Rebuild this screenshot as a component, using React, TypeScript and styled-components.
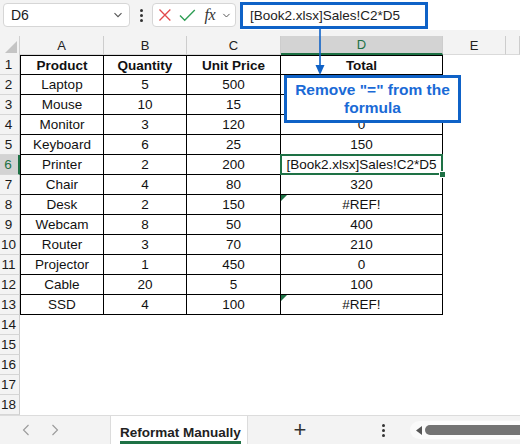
import React from "react";
import styled, { createGlobalStyle, css } from "styled-components";

const GlobalStyle = createGlobalStyle`
    html, body {
        margin: 0;
        padding: 0;
        background: #ffffff;
    }
    body {
        font-family: "Liberation Sans", Arial, sans-serif;
        color: #1a1a1a;
    }
`;

const GREEN = "#1e7145";
const BLUE = "#0f62c7";

const Page = styled.div`
    position: relative;
    width: 520px;
    height: 444px;
    overflow: hidden;
    background: #ffffff;
    display: flex;
    flex-direction: column;
`;

const TopBar = styled.div`
    height: 36px;
    background: #f3f3f3;
    display: flex;
    align-items: flex-start;
    padding: 3px 0 0 3px;
    box-sizing: border-box;
`;

const NameBox = styled.div`
    width: 127px;
    height: 24px;
    box-sizing: border-box;
    background: #ffffff;
    border: 1px solid #d6d6d6;
    border-radius: 4px;
    display: flex;
    align-items: center;
    justify-content: space-between;
    padding: 0 6px 0 7px;
    font-size: 14px;
    color: #1a1a1a;
`;

const Dots = styled.div`
    width: 22px;
    height: 24px;
    display: flex;
    flex-direction: column;
    align-items: center;
    justify-content: center;
    gap: 2px;
    span {
        width: 3px;
        height: 3px;
        border-radius: 50%;
        background: #333;
    }
`;

const FxBox = styled.div`
    width: 84px;
    height: 24px;
    box-sizing: border-box;
    background: #ffffff;
    border: 1px solid #d6d6d6;
    border-radius: 4px;
    display: flex;
    align-items: center;
    padding: 0 4px 0 5px;
    gap: 7px;
`;

const FxText = styled.span`
    font-family: "Liberation Serif", "Times New Roman", serif;
    font-style: italic;
    font-size: 16px;
    color: #333;
    margin-left: 2px;
    letter-spacing: -0.5px;
`;

const FormulaField = styled.div`
    flex: 1;
    height: 30px;
    margin-top: -3px;
    margin-left: 4px;
    background: #ffffff;
    display: flex;
    align-items: center;
`;

const Highlight = styled.div`
    width: 188px;
    height: 27px;
    box-sizing: border-box;
    border: 3px solid ${BLUE};
    display: flex;
    align-items: center;
    padding-left: 7px;
    font-size: 13.5px;
    color: #222;
    margin-top: 1px;
`;

const Sheet = styled.div`
    display: grid;
    grid-template-columns: 20px 84px 83px 94px 162px 63px 1fr;
    grid-template-rows: 19px repeat(18, 20px);
    font-size: 13.5px;
`;

const Corner = styled.div`
    background: #f3f3f3;
    border-right: 1px solid #d0d0d0;
    position: relative;
    &::after {
        content: "";
        position: absolute;
        right: 2px;
        bottom: 2px;
        border-style: solid;
        border-width: 0 0 12px 12px;
        border-color: transparent transparent #c4c4c4 transparent;
    }
`;

const ColHead = styled.div<{ $active?: boolean }>`
    background: ${(p) => (p.$active ? "#d3d3d3" : "#f3f3f3")};
    border-right: 1px solid #cdcdcd;
    border-bottom: ${(p) => (p.$active ? `2px solid ${GREEN}` : "1px solid #dadada")};
    box-sizing: border-box;
    display: flex;
    align-items: center;
    justify-content: center;
    font-size: 13px;
    color: ${(p) => (p.$active ? GREEN : "#222")};
`;

const RowHead = styled.div<{ $active?: boolean }>`
    background: ${(p) => (p.$active ? "#d3d3d3" : "#f3f3f3")};
    border-right: ${(p) => (p.$active ? `2px solid ${GREEN}` : "1px solid #cdcdcd")};
    border-bottom: 1px solid #d6d6d6;
    box-sizing: border-box;
    display: flex;
    align-items: center;
    justify-content: center;
    padding-right: 2px;
    font-size: 13.5px;
    color: ${(p) => (p.$active ? GREEN : "#1a1a1a")};
`;

const Cell = styled.div<{
    $table?: boolean;
    $bold?: boolean;
    $firstCol?: boolean;
    $firstRow?: boolean;
    $selected?: boolean;
    $flag?: boolean;
}>`
    position: relative;
    box-sizing: border-box;
    display: flex;
    align-items: center;
    justify-content: center;
    white-space: nowrap;
    color: #111;
    font-weight: ${(p) => (p.$bold ? 700 : 400)};
    ${(p) =>
        p.$table &&
        css`
            border-right: 1px solid #000;
            border-bottom: 1px solid #000;
        `}
    ${(p) =>
        p.$table &&
        p.$firstCol &&
        css`
            border-left: 1px solid #000;
        `}
    ${(p) =>
        p.$table &&
        p.$firstRow &&
        css`
            border-top: 1px solid #000;
        `}
    ${(p) =>
        p.$flag &&
        css`
            &::before {
                content: "";
                position: absolute;
                left: 0;
                top: 0;
                border-style: solid;
                border-width: 6px 6px 0 0;
                border-color: ${GREEN} transparent transparent transparent;
            }
        `}
    ${(p) =>
        p.$selected &&
        css`
            &::after {
                content: "";
                position: absolute;
                left: -1px;
                top: -1px;
                right: -1px;
                bottom: -1px;
                border: 2px solid ${GREEN};
                pointer-events: none;
            }
            &::before {
                content: "";
                position: absolute;
                right: -4px;
                bottom: -4px;
                width: 5px;
                height: 5px;
                background: ${GREEN};
                border: 1px solid #fff;
                z-index: 2;
            }
        `}
`;

const TabBar = styled.div`
    flex: 1;
    background: #f3f3f3;
    border-top: 1px solid #dcdcdc;
    display: flex;
    align-items: stretch;
`;

const NavArrows = styled.div`
    width: 110px;
    display: flex;
    align-items: center;
    padding-left: 22px;
    gap: 21px;
    box-sizing: border-box;
`;

const Tab = styled.div`
    width: 138px;
    background: #ffffff;
    border-left: 1px solid #dcdcdc;
    border-right: 1px solid #dcdcdc;
    display: flex;
    align-items: center;
    padding-left: 9px;
    box-sizing: border-box;
`;

const TabLabel = styled.span`
    font-size: 13.5px;
    font-weight: 600;
    color: #222;
    border-bottom: 3px solid ${GREEN};
    padding: 4px 0 1px;
    margin-top: 4px;
`;

const AddTab = styled.div`
    width: 104px;
    display: flex;
    align-items: center;
    justify-content: center;
    font-size: 22px;
    font-weight: 300;
    color: #333;
`;

const Spacer = styled.div`
    flex: 1;
    display: flex;
    align-items: center;
    justify-content: flex-end;
    padding-right: 16px;
`;

const Scroll = styled.div`
    width: 104px;
    margin: 5px 0;
    background: #fafafa;
    border-radius: 10px 0 0 10px;
    display: flex;
    align-items: center;
    padding-left: 6px;
    gap: 3px;
`;

const Thumb = styled.div`
    flex: 1;
    height: 10px;
    border-radius: 5px 0 0 5px;
    background: #717171;
`;

const Arrow = styled.svg`
    position: absolute;
    left: 314px;
    top: 29px;
`;

const Callout = styled.div`
    position: absolute;
    left: 284px;
    top: 75px;
    width: 177px;
    height: 48px;
    box-sizing: border-box;
    background: #ffffff;
    border: 3px solid ${BLUE};
    display: flex;
    align-items: center;
    justify-content: center;
    text-align: center;
    font-size: 15.5px;
    line-height: 18px;
    font-weight: 700;
    color: #1a6ad6;
    padding: 0 4px;
`;

const Chevron = ({ size = 10 }: { size?: number }) => (
    <svg width={size} height={size} viewBox="0 0 10 10">
        <path d="M1.5 3.2 L5 6.7 L8.5 3.2" fill="none" stroke="#555" strokeWidth="1.1" />
    </svg>
);

const columns = ["A", "B", "C", "D", "E", ""];

const rows: string[][] = [
    ["Product", "Quantity", "Unit Price", "Total"],
    ["Laptop", "5", "500", ""],
    ["Mouse", "10", "15", ""],
    ["Monitor", "3", "120", "0"],
    ["Keyboard", "6", "25", "150"],
    ["Printer", "2", "200", "[Book2.xlsx]Sales!C2*D5"],
    ["Chair", "4", "80", "320"],
    ["Desk", "2", "150", "#REF!"],
    ["Webcam", "8", "50", "400"],
    ["Router", "3", "70", "210"],
    ["Projector", "1", "450", "0"],
    ["Cable", "20", "5", "100"],
    ["SSD", "4", "100", "#REF!"],
];

const TOTAL_ROWS = 18;

export default function App() {
    const renderRow = (r: number) => {
        const data = rows[r];
        const rowNo = r + 1;
        const cells = [];
        for (let c = 0; c < 6; c++) {
            const inTable = !!data && c < 4;
            cells.push(
                <Cell
                    key={c}
                    $table={inTable}
                    $firstCol={c === 0}
                    $firstRow={r === 0}
                    $bold={r === 0}
                    $selected={rowNo === 6 && c === 3}
                    $flag={c === 3 && data?.[3] === "#REF!"}
                >
                    {inTable ? data[c] : ""}
                </Cell>
            );
        }
        return (
            <React.Fragment key={r}>
                <RowHead $active={rowNo === 6}>{rowNo}</RowHead>
                {cells}
            </React.Fragment>
        );
    };

    return (
        <>
            <GlobalStyle />
            <Page>
                <TopBar>
                    <NameBox>
                        D6
                        <Chevron />
                    </NameBox>
                    <Dots>
                        <span />
                        <span />
                        <span />
                    </Dots>
                    <FxBox>
                        <svg width="14" height="14" viewBox="0 0 14 14">
                            <path d="M1.5 1.5 L12.5 12.5 M12.5 1.5 L1.5 12.5" stroke="#e2494b" strokeWidth="1.3" />
                        </svg>
                        <svg width="17" height="14" viewBox="0 0 17 14">
                            <path d="M1 7.5 L5.8 12.3 L16 2" fill="none" stroke="#2f9e55" strokeWidth="1.4" />
                        </svg>
                        <FxText>fx</FxText>
                        <Chevron size={9} />
                    </FxBox>
                    <FormulaField>
                        <Highlight>[Book2.xlsx]Sales!C2*D5</Highlight>
                    </FormulaField>
                </TopBar>
                <Sheet>
                    <Corner />
                    {columns.map((col) => (
                        <ColHead key={col || "next"} $active={col === "D"}>
                            {col}
                        </ColHead>
                    ))}
                    {Array.from({ length: TOTAL_ROWS }, (_, r) => renderRow(r))}
                </Sheet>
                <TabBar>
                    <NavArrows>
                        <svg width="8" height="12" viewBox="0 0 8 12">
                            <path d="M6.5 1 L1.5 6 L6.5 11" fill="none" stroke="#9a9a9a" strokeWidth="1.1" />
                        </svg>
                        <svg width="8" height="12" viewBox="0 0 8 12">
                            <path d="M1.5 1 L6.5 6 L1.5 11" fill="none" stroke="#9a9a9a" strokeWidth="1.1" />
                        </svg>
                    </NavArrows>
                    <Tab>
                        <TabLabel>Reformat Manually</TabLabel>
                    </Tab>
                    <AddTab>+</AddTab>
                    <Spacer>
                        <Dots>
                            <span />
                            <span />
                            <span />
                        </Dots>
                    </Spacer>
                    <Scroll>
                        <svg width="6" height="9" viewBox="0 0 6 9">
                            <path d="M6 0 L0 4.5 L6 9 Z" fill="#555" />
                        </svg>
                        <Thumb />
                    </Scroll>
                </TabBar>
                <Arrow width="12" height="47" viewBox="0 0 12 47">
                    <path d="M6 0 L6 38" stroke={BLUE} strokeWidth="1.6" />
                    <path d="M1.5 36 L6 46 L10.5 36 Z" fill={BLUE} />
                </Arrow>
                <Callout>Remove "=" from the formula</Callout>
            </Page>
        </>
    );
}
